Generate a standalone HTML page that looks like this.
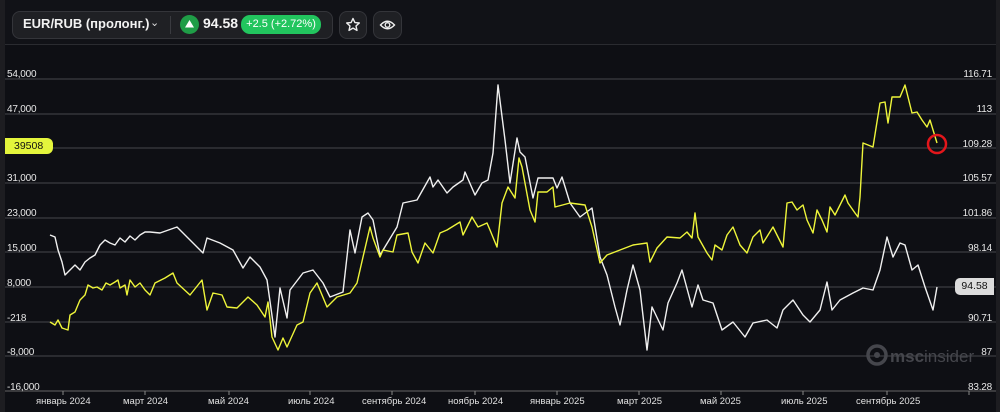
<!DOCTYPE html><html><head><meta charset="utf-8"><style>
*{margin:0;padding:0;box-sizing:border-box}
body{width:1000px;height:412px;background:#1d1d21;font-family:"Liberation Sans",sans-serif;overflow:hidden;position:relative}
#panel{position:absolute;left:5px;top:0;width:991px;height:412px;background:#0e0f14}
#top{position:absolute;left:5px;top:0;width:991px;height:45px;background:#111217;border-bottom:1px solid #2a2b30}
.pill{position:absolute;top:11px;height:28px;background:#1f2024;border:1px solid #34353a;border-radius:8px}
.lab{position:absolute;font-size:10px;color:#e6e6e6;letter-spacing:-0.2px}
.dt{position:absolute;top:396px;font-size:9.5px;color:#e0e0e0}
</style></head><body>
<div id="panel"></div>
<div id="top"></div>
<div class="pill" style="left:12px;width:321px"></div>
<div style="position:absolute;left:23px;top:16px;font-size:13px;font-weight:bold;color:#f2f2f2">EUR/RUB (пролонг.)</div>
<div style="position:absolute;left:150px;top:16px;font-size:11px;color:#ddd">⌄</div>
<div style="position:absolute;left:170px;top:16px;width:1px;height:18px;background:#3a3b40"></div>
<div style="position:absolute;left:180px;top:15px;width:19px;height:19px;border-radius:50%;background:#1f9d47"></div>
<svg style="position:absolute;left:184px;top:19px" width="11" height="10"><path d="M5.5 1 L10 8.5 L1 8.5Z" fill="#fff"/></svg>
<div style="position:absolute;left:203px;top:15px;font-size:14px;font-weight:bold;color:#f5f5f5">94.58</div>
<div style="position:absolute;left:241px;top:15px;width:80px;height:19px;border-radius:9px;background:#22c55e;color:#fff;font-size:11px;text-align:center;line-height:19px">+2.5 (+2.72%)</div>
<div class="pill" style="left:339px;width:28px"></div>
<svg style="position:absolute;left:345px;top:17px" width="16" height="16" viewBox="0 0 16 16"><path d="M8 1.5 L9.9 5.6 L14.3 6 L11 9 L12 13.4 L8 11.1 L4 13.4 L5 9 L1.7 6 L6.1 5.6Z" fill="none" stroke="#eee" stroke-width="1.4" stroke-linejoin="round"/></svg>
<div class="pill" style="left:373px;width:29px"></div>
<svg style="position:absolute;left:379px;top:17px" width="17" height="16" viewBox="0 0 17 16"><path d="M1.5 8 Q8.5 0.5 15.5 8 Q8.5 15.5 1.5 8Z" fill="none" stroke="#eee" stroke-width="1.4"/><circle cx="8.5" cy="8" r="2.3" fill="none" stroke="#eee" stroke-width="1.4"/></svg>

<svg style="position:absolute;left:0;top:0" width="1000" height="412">
<g stroke="#3b3c42" stroke-width="1.2">
<line x1="5" y1="79" x2="996" y2="79"/><line x1="5" y1="114" x2="996" y2="114"/><line x1="5" y1="148" x2="996" y2="148"/><line x1="5" y1="183" x2="996" y2="183"/><line x1="5" y1="218" x2="996" y2="218"/><line x1="5" y1="252" x2="996" y2="252"/><line x1="5" y1="287" x2="996" y2="287"/><line x1="5" y1="322" x2="996" y2="322"/><line x1="5" y1="356" x2="996" y2="356"/>
</g>
<line x1="5" y1="391" x2="996" y2="391" stroke="#666" stroke-width="1"/>
<g stroke="#888"><line x1="63" y1="391" x2="63" y2="395"/><line x1="145" y1="391" x2="145" y2="395"/><line x1="229" y1="391" x2="229" y2="395"/><line x1="310" y1="391" x2="310" y2="395"/><line x1="392" y1="391" x2="392" y2="395"/><line x1="475" y1="391" x2="475" y2="395"/><line x1="557" y1="391" x2="557" y2="395"/><line x1="639" y1="391" x2="639" y2="395"/><line x1="721" y1="391" x2="721" y2="395"/><line x1="803" y1="391" x2="803" y2="395"/><line x1="887" y1="391" x2="887" y2="395"/><line x1="969" y1="391" x2="969" y2="395"/></g>
<g font-family="Liberation Sans,sans-serif" fill="#45464c"><circle cx="877" cy="355" r="9" fill="none" stroke="#45464c" stroke-width="3.5"/><circle cx="877" cy="355" r="3" fill="#45464c"/><text x="890" y="362" font-size="17"><tspan font-weight="bold">msc</tspan>insider</text></g>
<polyline fill="none" stroke="#f0f0f0" stroke-width="1.4" stroke-linejoin="round" points="50,235 55,237 58,250 62,262 65,275 70,270 75,265 80,270 85,262 90,258 95,255 100,245 105,240 110,243 115,245 120,238 125,242 130,236 135,240 140,235 145,232 150,232 160,233 177,227 190,240 203,253 207,238 220,243 233,250 243,268 250,257 260,267 267,280 275,337 280,288 287,318 290,290 303,273 313,270 323,283 330,297 343,292 350,230 355,253 362,217 368,213 373,220 380,255 397,227 403,203 417,200 430,177 433,187 438,180 447,193 453,187 463,180 465,172 475,195 482,183 488,180 493,153 498,85 505,140 510,183 517,138 520,152 525,157 533,198 538,178 553,178 557,188 562,177 570,203 580,217 592,208 600,257 607,275 615,307 620,325 627,290 633,265 640,290 647,350 652,307 663,330 668,303 677,283 682,270 692,307 698,285 703,300 713,303 722,330 733,322 745,337 753,323 767,320 777,328 783,310 793,300 803,315 810,322 820,310 827,282 832,310 840,300 853,293 863,288 873,290 880,270 887,237 893,257 900,243 905,245 912,270 918,265 925,287 933,310 937,287"/>
<polyline fill="none" stroke="#eef53a" stroke-width="1.4" stroke-linejoin="round" points="50,322 55,325 58,320 62,328 68,330 70,315 75,312 80,300 85,295 88,285 93,288 97,287 102,290 106,283 110,285 115,282 118,280 120,288 125,285 127,295 130,280 135,287 140,283 145,290 150,295 155,283 165,278 173,273 177,283 190,295 202,280 207,310 213,293 222,295 227,307 237,308 248,297 257,305 265,317 268,302 272,337 278,350 283,338 287,347 297,325 303,322 310,293 317,283 327,307 337,297 350,293 357,283 363,257 370,227 373,238 380,257 383,250 393,252 397,235 408,233 412,252 418,263 425,243 433,253 440,233 447,230 460,222 463,235 472,217 478,227 487,223 490,230 497,247 502,203 508,187 515,198 519,158 522,167 530,210 535,222 538,192 547,192 553,187 555,207 570,203 585,205 592,227 600,263 607,255 620,250 633,245 647,243 650,262 657,248 667,237 680,238 687,232 692,238 695,213 698,237 707,253 712,260 715,245 722,250 727,235 733,227 740,245 747,253 753,237 760,230 763,243 773,227 783,247 787,203 792,202 797,210 803,205 807,220 813,233 817,210 822,220 827,232 830,207 835,215 845,195 848,203 855,213 858,217 860,197 863,143 873,147 880,103 885,102 888,123 892,97 900,97 905,85 912,113 917,112 922,120 927,127 930,120 937,143"/>
<circle cx="937" cy="144" r="9" fill="none" stroke="#e3161b" stroke-width="2.5"/>
</svg>
<div class="lab" style="left:7px;top:69px">54,000</div>
<div class="lab" style="left:7px;top:104px">47,000</div>
<div style="position:absolute;left:5px;top:138px;width:48px;height:16px;background:#e4f53c;border-radius:0 6px 6px 0;font-size:10.5px;color:#111;line-height:16px;padding-left:9px">39508</div>
<div class="lab" style="left:7px;top:173px">31,000</div>
<div class="lab" style="left:7px;top:208px">23,000</div>
<div class="lab" style="left:7px;top:243px">15,000</div>
<div class="lab" style="left:7px;top:278px">8,000</div>
<div class="lab" style="left:7px;top:313px">-218</div>
<div class="lab" style="left:7px;top:347px">-8,000</div>
<div class="lab" style="left:7px;top:382px">-16,000</div>
<div class="lab" style="right:8px;top:69px">116.71</div>
<div class="lab" style="right:8px;top:104px">113</div>
<div class="lab" style="right:8px;top:139px">109.28</div>
<div class="lab" style="right:8px;top:173px">105.57</div>
<div class="lab" style="right:8px;top:208px">101.86</div>
<div class="lab" style="right:8px;top:243px">98.14</div>
<div style="position:absolute;left:955px;top:278px;width:39px;height:17px;background:#dcdcdc;border-radius:5px 0 0 5px;font-size:10.5px;color:#111;line-height:17px;text-align:center">94.58</div>
<div class="lab" style="right:8px;top:313px">90.71</div>
<div class="lab" style="right:8px;top:347px">87</div>
<div class="lab" style="right:8px;top:382px">83.28</div>
<div class="dt" style="left:36px">январь 2024</div>
<div class="dt" style="left:123px">март 2024</div>
<div class="dt" style="left:208px">май 2024</div>
<div class="dt" style="left:288px">июль 2024</div>
<div class="dt" style="left:362px">сентябрь 2024</div>
<div class="dt" style="left:448px">ноябрь 2024</div>
<div class="dt" style="left:530px">январь 2025</div>
<div class="dt" style="left:617px">март 2025</div>
<div class="dt" style="left:700px">май 2025</div>
<div class="dt" style="left:781px">июль 2025</div>
<div class="dt" style="left:856px">сентябрь 2025</div>
</body></html>
